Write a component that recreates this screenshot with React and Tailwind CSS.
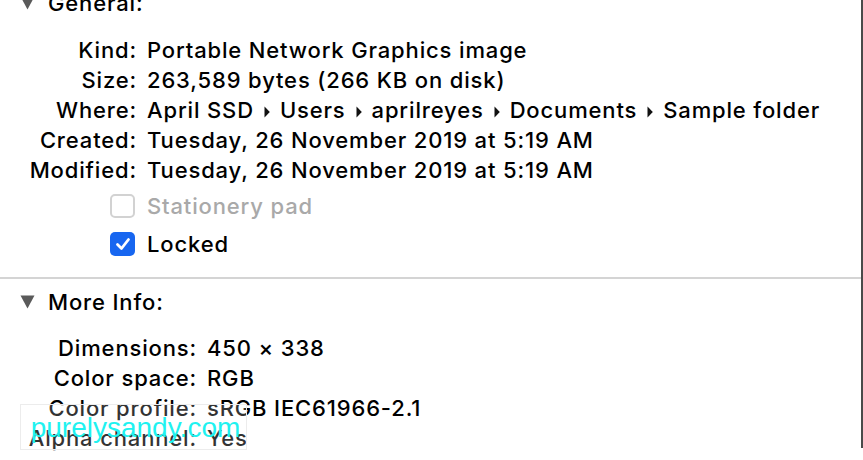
import React from 'react';

const font = { fontFamily: 'Inter, "Liberation Sans", Arial, sans-serif' };

const Triangle = () => (
  <svg width="15" height="14" viewBox="0 0 15 14" className="shrink-0">
    <path d="M0.5 0.5 H14.5 L7.5 13.5 Z" fill="#5a5a5a" />
  </svg>
);

const Row = ({ label, children, labelWidth }) => (
  <div className="flex h-[30px] items-center">
    <div className="shrink-0 text-right whitespace-nowrap" style={{ width: labelWidth }}>{label}</div>
    <div className="pl-[10px] whitespace-nowrap">{children}</div>
  </div>
);

const Crumb = () => (
  <svg width="6" height="12" viewBox="0 0 6 12" className="mx-[10px] inline-block">
    <path d="M0.5 0.5 L5.8 6 L0.5 11.5 Z" fill="#111" />
  </svg>
);

const Box = ({ checked }) =>
  checked ? (
    <div className="flex h-[24px] w-[25px] items-center justify-center rounded-[5px] bg-[#1766f0]">
      <svg width="16" height="14" viewBox="0 0 16 14">
        <path d="M2.5 7.5 L6.5 11.5 L13.5 2.5" stroke="#fff" strokeWidth="2.8" fill="none" strokeLinecap="round" strokeLinejoin="round" />
      </svg>
    </div>
  ) : (
    <div className="h-[24px] w-[25px] rounded-[5px] border-2 border-[#d2d2d2] bg-white" />
  );

export default function App() {
  return (
    <div className="relative h-[460px] w-[863px] overflow-hidden bg-white text-[22px] font-medium tracking-[0.85px] text-black" style={font}>
      <div className="h-full border-r-2 border-[#4a4a4a]">
        {/* General */}
        <div className="-mt-[12px] flex h-[30px] items-center gap-[13px] pl-[20px]">
          <Triangle />
          <span>General:</span>
        </div>
        <div className="mt-[17px]">
          <Row label="Kind:" labelWidth={137}>Portable Network Graphics image</Row>
          <Row label="Size:" labelWidth={137}>263,589 bytes (266 KB on disk)</Row>
          <Row label="Where:" labelWidth={137}>
            April SSD<Crumb />Users<Crumb />aprilreyes<Crumb />Documents<Crumb />Sample folder
          </Row>
          <Row label="Created:" labelWidth={137}>Tuesday, 26 November 2019 at 5:19 AM</Row>
          <Row label="Modified:" labelWidth={137}>Tuesday, 26 November 2019 at 5:19 AM</Row>
        </div>
        <div className="mt-[6px] flex h-[30px] items-center gap-[12px] pl-[110px]">
          <Box />
          <span className="text-[#a9a9a9]">Stationery pad</span>
        </div>
        <div className="mt-[8px] flex h-[30px] items-center gap-[12px] pl-[110px]">
          <Box checked />
          <span>Locked</span>
        </div>
        <div className="mt-[18px] h-[2px] bg-[#d4d4d4]" />

        {/* More Info */}
        <div className="mt-[8px] flex h-[30px] items-center gap-[13px] pl-[20px]">
          <Triangle />
          <span>More Info:</span>
        </div>
        <div className="mt-[16px]">
          <Row label="Dimensions:" labelWidth={197}>450 × 338</Row>
          <Row label="Color space:" labelWidth={197}>RGB</Row>
          <Row label="Color profile:" labelWidth={197}>sRGB IEC61966-2.1</Row>
          <Row label="Alpha channel:" labelWidth={197}>Yes</Row>
        </div>
      </div>

      {/* watermark */}
      <div className="absolute left-[20px] top-[404px] flex h-[46px] w-[227px] items-start justify-center border border-[#ececec] bg-white/20">
        <span className="mt-[2px] pl-[4px] text-[28px] font-normal tracking-normal text-[#1ff2f0]" style={{ fontFamily: '"Liberation Sans", Arial, sans-serif' }}>purelysandy.com</span>
      </div>
    </div>
  );
}
